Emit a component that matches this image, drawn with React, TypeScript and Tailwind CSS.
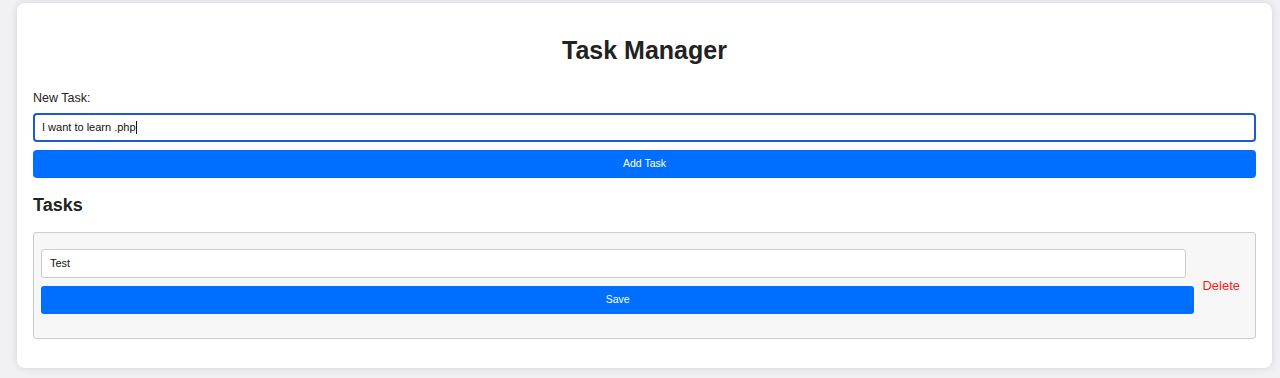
import React from "react";

export default function App() {
  const font = { fontFamily: '"Liberation Sans", Arial, sans-serif' };
  return (
    <div className="w-[1280px] h-[378px] bg-[#f0f0f5] pt-[3px] pl-[17px] pr-[8px]" style={font}>
      <div className="w-[1255px] h-[365px] bg-white rounded-[8px] shadow-[0_0_8px_rgba(0,0,0,0.12)] pt-[33px] px-[16px]">
        <h1 className="text-[25px] leading-[28px] font-bold text-[#222] text-center">Task Manager</h1>
        <div className="mt-[27px] text-[12.5px] leading-[14px] text-[#222]">New Task:</div>
        <div className="mt-[8px] h-[29px] border-2 border-[#1d5ad0] rounded-[4px] bg-white flex items-center pl-[7px] text-[11px] text-[#111]">
          <span>I want to learn .php</span>
          <span className="inline-block w-[1px] h-[13px] bg-[#111]" />
        </div>
        <div className="mt-[8px] h-[28px] rounded-[4px] bg-[#006fff] flex items-center justify-center text-white text-[10.5px]">
          Add Task
        </div>
        <h2 className="mt-[17px] text-[18px] leading-[21px] font-bold text-[#222]">Tasks</h2>
        <div className="mt-[16px] h-[107px] border border-[#cccccc] rounded-[3px] bg-[#f7f7f7] pt-[16px] pl-[7px] pr-[15px] flex items-start">
          <div className="flex-1 flex flex-col gap-[8px]">
            <div className="mr-[8px] h-[29px] border border-[#cccccc] rounded-[3px] bg-white flex items-center pl-[8px] text-[11px] text-[#111]">
              Test
            </div>
            <div className="h-[28px] rounded-[3px] bg-[#006fff] flex items-center justify-center text-white text-[10.5px]">
              Save
            </div>
          </div>
          <div className="ml-[8px] pt-[29px] text-[13px] leading-[15px] text-[#ff1a1a]">Delete</div>
        </div>
      </div>
    </div>
  );
}
